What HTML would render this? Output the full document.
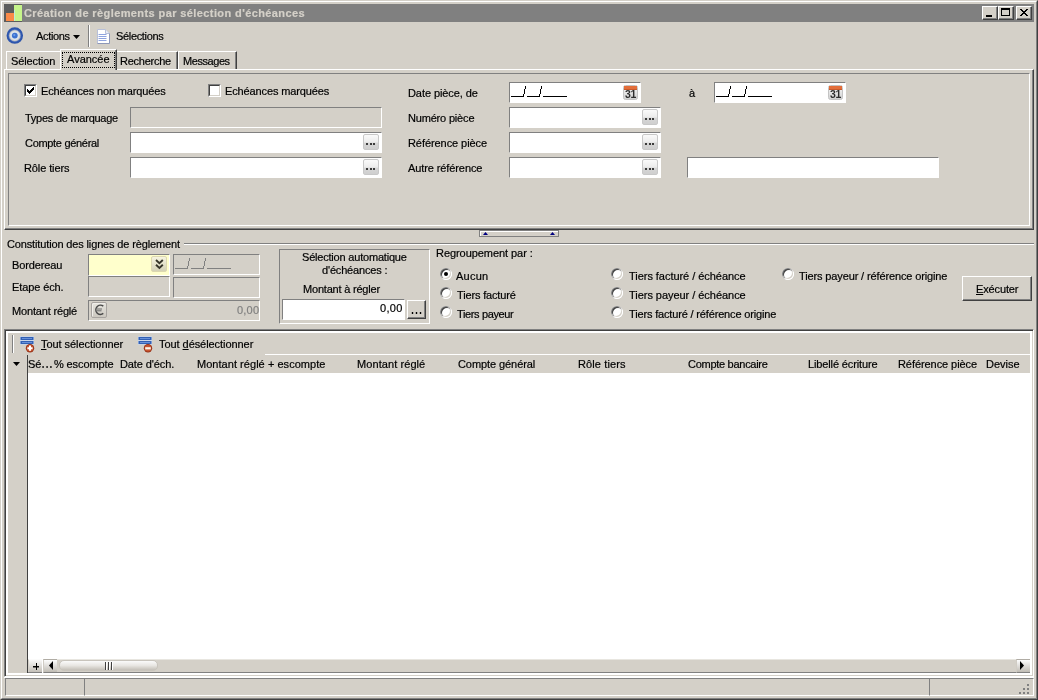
<!DOCTYPE html>
<html><head><meta charset="utf-8">
<style>
*{box-sizing:border-box}
html,body{margin:0;padding:0}
body{width:1038px;height:700px;overflow:hidden;background:#D4D0C8;position:relative;font-family:"Liberation Sans",sans-serif;font-size:11px;color:#000}
.a{position:absolute}
svg text{will-change:transform}
.t{position:absolute;white-space:nowrap;line-height:13px;font-size:11px;will-change:transform;-webkit-text-stroke:0.2px currentColor}
.sunk{position:absolute;border-top:1px solid #808080;border-left:1px solid #808080;border-bottom:1px solid #fff;border-right:1px solid #fff}
.fld{position:absolute;background:#fff;border-top:1px solid #808080;border-left:1px solid #808080;border-bottom:1px solid #fff;border-right:1px solid #fff}
.dis{background:#D4D0C8}
.dots{position:absolute;width:16px;height:16px;border:1px solid #C8C8C8;border-radius:2px;background:linear-gradient(#fafafa,#ececec 50%,#d6d6d6 60%,#cfcfcf)}
.dots i{position:absolute;top:8px;width:2px;height:2px;background:#3a3a3a}
.etch{position:absolute;border:1px solid #808080;box-shadow:inset 1px 1px 0 #fff,1px 1px 0 #fff}
.radio{position:absolute;width:12px;height:12px;border-radius:50%;background:#fff;
 box-shadow: inset 1px 1px 0 #808080, inset -1px -1px 0 #fff;}
.radio:before{content:"";position:absolute;left:1px;top:1px;width:10px;height:10px;border-radius:50%;box-shadow: inset 1px 1px 0 #404040, inset -1px -1px 0 #D4D0C8}
.radio.on:after{content:"";position:absolute;left:4px;top:4px;width:4px;height:4px;border-radius:50%;background:#000}
.chk{position:absolute;width:13px;height:13px;background:#fff;border-top:1px solid #808080;border-left:1px solid #808080;border-bottom:1px solid #fff;border-right:1px solid #fff}
.chk:before{content:"";position:absolute;left:0;top:0;right:0;bottom:0;border-top:1px solid #404040;border-left:1px solid #404040;border-bottom:1px solid #D4D0C8;border-right:1px solid #D4D0C8}
.btn{position:absolute;background:#D4D0C8;border-top:1px solid #fff;border-left:1px solid #fff;border-right:1px solid #404040;border-bottom:1px solid #404040;box-shadow:inset -1px -1px 0 #808080}
</style></head><body>

<!-- window frame -->
<div class="a" style="left:0;top:0;width:1038px;height:700px;border-top:1px solid #D4D0C8;border-left:1px solid #D4D0C8;border-right:1px solid #404040;border-bottom:1px solid #404040"></div>
<div class="a" style="left:1px;top:1px;width:1036px;height:698px;border-top:1px solid #fff;border-left:1px solid #fff;border-right:1px solid #808080;border-bottom:1px solid #808080"></div>

<!-- title bar -->
<div class="a" style="left:4px;top:4px;width:1030px;height:18px;background:#808080"></div>
<div class="a" style="left:4px;top:4px;width:18px;height:18px;background:#5c5c5c"></div>
<div class="a" style="left:6px;top:13px;width:8px;height:8px;background:#FA8A48"></div>
<div class="a" style="left:14px;top:5px;width:8px;height:16px;background:#C6F48A"></div>
<div class="a" style="left:14px;top:10px;width:1px;height:11px;background:#BEEFD8"></div>
<div class="t" style="left:24px;top:7px;font-weight:bold;color:#D4D0C8;letter-spacing:0.4px">Création de règlements par sélection d'échéances</div>
<!-- title buttons -->
<div class="btn" style="left:982px;top:6px;width:16px;height:14px"></div>
<div class="a" style="left:986px;top:15px;width:6px;height:2px;background:#000"></div>
<div class="btn" style="left:998px;top:6px;width:16px;height:14px"></div>
<div class="a" style="left:1001px;top:8px;width:9px;height:8px;border:1px solid #000;border-top-width:2px"></div>
<div class="btn" style="left:1016px;top:6px;width:16px;height:14px"></div>
<svg class="a" style="left:1016px;top:6px" width="16" height="14"><path d="M4 3 L11 10 M5 3 L12 10 M11 3 L4 10 M12 3 L5 10" stroke="#000" stroke-width="1" shape-rendering="crispEdges"/></svg>


<!-- toolbar -->
<svg class="a" style="left:5px;top:26px" width="20" height="20" viewBox="0 0 20 20">
 <circle cx="9.8" cy="9.6" r="7.1" fill="none" stroke="#2E56AC" stroke-width="2.3"/>
 <circle cx="9.8" cy="9.6" r="5.9" fill="none" stroke="#5A7EC8" stroke-width="0.6"/>
 <circle cx="9.8" cy="9.6" r="4.6" fill="#DCE4EC"/>
 <circle cx="9.8" cy="9.6" r="2.9" fill="#3C72D0"/>
 <circle cx="9.3" cy="9.1" r="1.1" fill="#6C9CE8"/>
</svg>
<div class="t" style="left:36px;top:30px;letter-spacing:-0.33px">Actions</div>
<svg class="a" style="left:73px;top:35px" width="8" height="5"><path d="M0 0 H7 L3.5 4 Z" fill="#000"/></svg>
<div class="a" style="left:88px;top:25px;width:1px;height:22px;background:#808080"></div>
<div class="a" style="left:89px;top:25px;width:1px;height:22px;background:#fff"></div>
<svg class="a" style="left:96px;top:28px" width="15" height="17" viewBox="0 0 15 17">
 <path d="M1.5 1.5 H9.5 L13.5 5.5 V15.5 H1.5 Z" fill="#fff" stroke="#B8C0D8" stroke-width="1"/>
 <path d="M9.5 1.5 V5.5 H13.5" fill="#E8ECF6" stroke="#B8C0D8" stroke-width="1"/>
 <path d="M13.5 5.5 V15.5 H1.5" fill="none" stroke="#8E98B8" stroke-width="1"/>
 <rect x="2.5" y="6" width="8" height="1" fill="#8FA4E0"/>
 <rect x="2.5" y="8" width="8" height="1" fill="#8FA4E0"/>
 <rect x="2.5" y="10" width="8" height="1" fill="#8FA4E0"/>
 <rect x="2.5" y="12" width="8" height="1" fill="#8FA4E0"/>
</svg>
<div class="t" style="left:116px;top:30px;letter-spacing:-0.33px">Sélections</div>

<!-- tabs -->
<div class="a" style="left:6px;top:51px;width:55px;height:18px;border-top:1px solid #fff;border-left:1px solid #fff"></div>
<div class="t" style="left:11px;top:55px;letter-spacing:-0.12px">Sélection</div>
<div class="a" style="left:116px;top:51px;width:62px;height:18px;border-top:1px solid #fff;border-right:1px solid #404040;box-shadow:inset -1px 0 0 #808080"></div>
<div class="t" style="left:120px;top:55px;letter-spacing:-0.25px">Recherche</div>
<div class="a" style="left:178px;top:51px;width:59px;height:18px;border-top:1px solid #fff;border-left:1px solid #fff;border-right:1px solid #404040;box-shadow:inset -1px 0 0 #808080"></div>
<div class="t" style="left:183px;top:55px;letter-spacing:-0.43px">Messages</div>

<!-- tab page -->
<div class="a" style="left:4px;top:69px;width:1030px;height:161px;border-top:1px solid #fff;border-left:1px solid #fff;border-right:1px solid #404040;border-bottom:1px solid #404040;box-shadow:inset -1px -1px 0 #808080"></div>
<!-- active tab -->
<div class="a" style="left:60px;top:49px;width:57px;height:21px;background:#D4D0C8;border-top:1px solid #fff;border-left:1px solid #fff;border-right:1px solid #404040;box-shadow:inset -1px 0 0 #808080"></div>
<div class="t" style="left:67px;top:53px">Avancée</div>
<div class="a" style="left:62px;top:52px;width:53px;height:16px;border:1px dotted #000"></div>

<!-- inner etched frame -->
<div class="sunk" style="left:8px;top:73px;width:1022px;height:153px"></div>


<!-- top panel contents -->
<div class="chk" style="left:24px;top:84px"></div>
<svg class="a" style="left:27px;top:87px" width="7" height="7" shape-rendering="crispEdges"><g fill="#000"><rect x="6" y="0" width="1" height="1"/><rect x="5" y="1" width="1" height="1"/><rect x="6" y="1" width="1" height="1"/><rect x="0" y="2" width="1" height="1"/><rect x="4" y="2" width="1" height="1"/><rect x="5" y="2" width="1" height="1"/><rect x="6" y="2" width="1" height="1"/><rect x="0" y="3" width="1" height="1"/><rect x="1" y="3" width="1" height="1"/><rect x="3" y="3" width="1" height="1"/><rect x="4" y="3" width="1" height="1"/><rect x="5" y="3" width="1" height="1"/><rect x="0" y="4" width="1" height="1"/><rect x="1" y="4" width="1" height="1"/><rect x="2" y="4" width="1" height="1"/><rect x="3" y="4" width="1" height="1"/><rect x="4" y="4" width="1" height="1"/><rect x="1" y="5" width="1" height="1"/><rect x="2" y="5" width="1" height="1"/><rect x="3" y="5" width="1" height="1"/><rect x="2" y="6" width="1" height="1"/></g></svg>
<div class="t" style="left:41px;top:85px;letter-spacing:-0.15px">Echéances non marquées</div>
<div class="chk" style="left:208px;top:84px"></div>
<div class="t" style="left:225px;top:85px;letter-spacing:-0.12px">Echéances marquées</div>

<div class="t" style="left:25px;top:112px;letter-spacing:-0.25px">Types de marquage</div>
<div class="fld dis" style="left:130px;top:107px;width:252px;height:21px"></div>
<div class="t" style="left:25px;top:137px;letter-spacing:-0.31px">Compte général</div>
<div class="fld" style="left:130px;top:132px;width:252px;height:21px"></div>
<div class="dots" style="left:363px;top:134px"><i style="left:2px"></i><i style="left:5.5px"></i><i style="left:9px"></i></div>
<div class="t" style="left:24px;top:162px;letter-spacing:-0.11px">Rôle tiers</div>
<div class="fld" style="left:130px;top:157px;width:252px;height:21px"></div>
<div class="dots" style="left:363px;top:159px"><i style="left:2px"></i><i style="left:5.5px"></i><i style="left:9px"></i></div>

<div class="t" style="left:408px;top:87px;letter-spacing:-0.08px">Date pièce, de</div>
<div class="fld" style="left:509px;top:82px;width:132px;height:21px"></div>
<svg class="a" style="left:509px;top:82px" width="60" height="18" shape-rendering="crispEdges"><g fill="#000"><rect x="2" y="14" width="13" height="1"/><rect x="16" y="4" width="1" height="3"/><rect x="15" y="7" width="1" height="5"/><rect x="14" y="12" width="1" height="2"/><rect x="18" y="14" width="13" height="1"/><rect x="32" y="4" width="1" height="3"/><rect x="31" y="7" width="1" height="5"/><rect x="30" y="12" width="1" height="2"/><rect x="34" y="14" width="24" height="1"/></g></svg>
<div class="t" style="left:408px;top:112px;letter-spacing:-0.18px">Numéro pièce</div>
<div class="fld" style="left:509px;top:107px;width:152px;height:21px"></div>
<div class="dots" style="left:642px;top:109px"><i style="left:2px"></i><i style="left:5.5px"></i><i style="left:9px"></i></div>
<div class="t" style="left:408px;top:137px;letter-spacing:-0.07px">Référence pièce</div>
<div class="fld" style="left:509px;top:132px;width:152px;height:21px"></div>
<div class="dots" style="left:642px;top:134px"><i style="left:2px"></i><i style="left:5.5px"></i><i style="left:9px"></i></div>
<div class="t" style="left:408px;top:162px;letter-spacing:-0.1px">Autre référence</div>
<div class="fld" style="left:509px;top:157px;width:152px;height:21px"></div>
<div class="dots" style="left:642px;top:159px"><i style="left:2px"></i><i style="left:5.5px"></i><i style="left:9px"></i></div>

<div class="t" style="left:689px;top:87px">à</div>
<div class="fld" style="left:714px;top:82px;width:132px;height:21px"></div>
<svg class="a" style="left:714px;top:82px" width="60" height="18" shape-rendering="crispEdges"><g fill="#000"><rect x="2" y="14" width="13" height="1"/><rect x="16" y="4" width="1" height="3"/><rect x="15" y="7" width="1" height="5"/><rect x="14" y="12" width="1" height="2"/><rect x="18" y="14" width="13" height="1"/><rect x="32" y="4" width="1" height="3"/><rect x="31" y="7" width="1" height="5"/><rect x="30" y="12" width="1" height="2"/><rect x="34" y="14" width="24" height="1"/></g></svg>
<div class="fld" style="left:687px;top:157px;width:252px;height:21px"></div>
<svg class="a" style="left:623px;top:85px;will-change:transform" width="15" height="15" viewBox="0 0 15 15">
 <defs><linearGradient id="cg623" x1="0" y1="0" x2="0" y2="1"><stop offset="0" stop-color="#FAFAFA"/><stop offset="1" stop-color="#D0D0D0"/></linearGradient></defs>
 <rect x="0.5" y="0.5" width="14" height="14" rx="2" fill="url(#cg623)" stroke="#C4C4C4"/>
 <rect x="1" y="1" width="13" height="4" fill="#E36E3A"/>
 <rect x="1" y="4" width="13" height="1" fill="#C85A2C"/>
 <text x="7.6" y="13.2" text-anchor="middle" font-family="Liberation Sans" font-weight="bold" font-size="10.5" letter-spacing="-0.3" fill="#2E2E2E">31</text>
</svg>
<svg class="a" style="left:828px;top:85px;will-change:transform" width="15" height="15" viewBox="0 0 15 15">
 <defs><linearGradient id="cg828" x1="0" y1="0" x2="0" y2="1"><stop offset="0" stop-color="#FAFAFA"/><stop offset="1" stop-color="#D0D0D0"/></linearGradient></defs>
 <rect x="0.5" y="0.5" width="14" height="14" rx="2" fill="url(#cg828)" stroke="#C4C4C4"/>
 <rect x="1" y="1" width="13" height="4" fill="#E36E3A"/>
 <rect x="1" y="4" width="13" height="1" fill="#C85A2C"/>
 <text x="7.6" y="13.2" text-anchor="middle" font-family="Liberation Sans" font-weight="bold" font-size="10.5" letter-spacing="-0.3" fill="#2E2E2E">31</text>
</svg>


<!-- splitter -->
<div class="a" style="left:479px;top:230px;width:80px;height:7px;border:1px solid #808080;box-shadow:inset 1px 1px 0 #fff"></div>
<svg class="a" style="left:479px;top:230px" width="80" height="7"><path d="M4 5 L6.5 2 L9 5 Z M71 5 L73.5 2 L76 5 Z" fill="#000080"/></svg>

<!-- middle section -->
<div class="t" style="left:7px;top:238px;letter-spacing:-0.14px">Constitution des lignes de règlement</div>
<div class="a" style="left:184px;top:243px;width:850px;height:1px;background:#808080"></div>
<div class="a" style="left:184px;top:244px;width:850px;height:1px;background:#fff"></div>

<div class="t" style="left:12px;top:259px;letter-spacing:-0.12px">Bordereau</div>
<div class="fld" style="left:88px;top:254px;width:82px;height:22px;background:#FFFFCC"></div>
<div class="a" style="left:151px;top:256px;width:16px;height:16px;border:1px solid #DCD8B0;border-radius:2px;background:linear-gradient(#F6F4E0,#D4D2B6)"></div>
<svg class="a" style="left:151.5px;top:256px" width="15" height="16"><path d="M4 4 L7.4 7.2 L10.8 4 M4 8.8 L7.4 12 L10.8 8.8" fill="none" stroke="#36362A" stroke-width="1.9"/></svg>
<div class="fld dis" style="left:173px;top:254px;width:87px;height:21px"></div>
<svg class="a" style="left:173px;top:254px" width="60" height="18" shape-rendering="crispEdges"><g fill="#808080"><rect x="2" y="14" width="13" height="1"/><rect x="16" y="4" width="1" height="3"/><rect x="15" y="7" width="1" height="5"/><rect x="14" y="12" width="1" height="2"/><rect x="18" y="14" width="13" height="1"/><rect x="32" y="4" width="1" height="3"/><rect x="31" y="7" width="1" height="5"/><rect x="30" y="12" width="1" height="2"/><rect x="34" y="14" width="24" height="1"/></g></svg>
<div class="t" style="left:12px;top:281px;letter-spacing:-0.11px">Etape éch.</div>
<div class="fld dis" style="left:88px;top:276px;width:82px;height:21px"></div>
<div class="fld dis" style="left:173px;top:277px;width:87px;height:21px"></div>
<div class="t" style="left:12px;top:305px;letter-spacing:-0.17px">Montant réglé</div>
<div class="fld dis" style="left:88px;top:300px;width:172px;height:21px"></div>
<div class="a" style="left:91px;top:302px;width:16px;height:16px;border:1px solid #A8A4A0;border-radius:2px;background:linear-gradient(#E6E4DE,#CCC8C0);box-shadow:inset 1px 1px 0 #F0EEEA"></div>
<svg class="a" style="left:91px;top:302px" width="16" height="16"><path d="M12.3 4.2 A4.6 4.6 0 1 0 12.3 11.4" fill="none" stroke="#4A4A4A" stroke-width="1.5"/><path d="M5.5 7 H11 M5.5 8.8 H10.5" stroke="#6A6A6A" stroke-width="1"/></svg>

<div class="t" style="left:237px;top:304px;color:#808080;letter-spacing:0.2px">0,00</div>

<!-- selection auto group -->
<div class="sunk" style="left:279px;top:249px;width:151px;height:75px"></div>
<div class="t" style="left:302px;top:251px;letter-spacing:-0.2px">Sélection automatique</div>
<div class="t" style="left:322px;top:264px;letter-spacing:-0.17px">d'échéances :</div>
<div class="t" style="left:303px;top:283px;letter-spacing:-0.2px">Montant à régler</div>
<div class="a" style="left:282px;top:299px;width:123px;height:21px;background:#fff;border-top:1px solid #808080;border-left:1px solid #808080;border-bottom:1px solid #fff;border-right:1px solid #fff"></div>
<div class="t" style="left:380px;top:302px;letter-spacing:0.3px">0,00</div>
<div class="btn" style="left:407px;top:300px;width:19px;height:19px"></div>
<svg class="a" style="left:411px;top:312px" width="12" height="2"><g fill="#000"><rect x="0.8" y="0" width="1.4" height="2"/><rect x="4.8" y="0" width="1.4" height="2"/><rect x="8.8" y="0" width="1.4" height="2"/></g></svg>

<!-- regroupement -->
<div class="t" style="left:436px;top:247px;letter-spacing:-0.06px">Regroupement par :</div>
<div class="radio on" style="left:440px;top:268px"></div>
<div class="t" style="left:456px;top:270px;letter-spacing:0.25px">Aucun</div>
<div class="radio" style="left:440px;top:287px"></div>
<div class="t" style="left:457px;top:289px;letter-spacing:-0.16px">Tiers facturé</div>
<div class="radio" style="left:440px;top:306px"></div>
<div class="t" style="left:457px;top:308px;letter-spacing:-0.36px">Tiers payeur</div>
<div class="radio" style="left:611px;top:268px"></div>
<div class="t" style="left:629px;top:270px;letter-spacing:-0.04px">Tiers facturé / échéance</div>
<div class="radio" style="left:611px;top:287px"></div>
<div class="t" style="left:629px;top:289px;letter-spacing:-0.04px">Tiers payeur / échéance</div>
<div class="radio" style="left:611px;top:306px"></div>
<div class="t" style="left:629px;top:308px;letter-spacing:-0.16px">Tiers facturé / référence origine</div>
<div class="radio" style="left:782px;top:268px"></div>
<div class="t" style="left:799px;top:270px;letter-spacing:-0.13px">Tiers payeur / référence origine</div>

<div class="btn" style="left:962px;top:276px;width:70px;height:25px"></div>
<div class="t" style="left:976px;top:283px;letter-spacing:-0.14px"><u>E</u>xécuter</div>


<!-- grid frame -->
<div class="a" style="left:4px;top:329px;width:1030px;height:348px;border-top:1px solid #808080;border-left:1px solid #808080;border-bottom:1px solid #fff;border-right:1px solid #fff;box-shadow:inset 1px 1px 0 #404040, inset -1px -1px 0 #D4D0C8"></div>
<div class="a" style="left:6px;top:331px;width:1026px;height:344px;background:#fff"></div>
<!-- toolbar + header band -->
<div class="a" style="left:8px;top:333px;width:1022px;height:40px;background:#D4D0C8"></div>
<div class="a" style="left:265px;top:354px;width:765px;height:1px;background:#fff"></div>
<div class="a" style="left:12px;top:335px;width:1px;height:18px;background:#808080"></div>
<div class="a" style="left:13px;top:335px;width:1px;height:18px;background:#fff"></div>
<svg class="a" style="left:20px;top:336px" width="16" height="17" viewBox="0 0 16 17">
 <rect x="0" y="0.5" width="14" height="4" fill="#C8DAF6"/>
 <rect x="0.5" y="1" width="13" height="3" fill="#3260B4"/><rect x="2" y="2" width="10" height="1" fill="#6890D8"/>
 <rect x="0" y="4.5" width="14" height="4" fill="#C8DAF6"/>
 <rect x="0.5" y="5" width="13" height="3" fill="#3260B4"/><rect x="2" y="6" width="10" height="1" fill="#6890D8"/>
 <circle cx="10" cy="12.2" r="4.2" fill="#98331A"/>
 <circle cx="10" cy="12.2" r="3.2" fill="#C85630"/>
 <path d="M10 9.6 V14.8 M7.4 12.2 H12.6" stroke="#fff" stroke-width="2"/>
</svg><svg class="a" style="left:138px;top:336px" width="16" height="17" viewBox="0 0 16 17">
 <rect x="0" y="0.5" width="14" height="4" fill="#C8DAF6"/>
 <rect x="0.5" y="1" width="13" height="3" fill="#3260B4"/><rect x="2" y="2" width="10" height="1" fill="#6890D8"/>
 <rect x="0" y="4.5" width="14" height="4" fill="#C8DAF6"/>
 <rect x="0.5" y="5" width="13" height="3" fill="#3260B4"/><rect x="2" y="6" width="10" height="1" fill="#6890D8"/>
 <circle cx="10" cy="12.2" r="4.2" fill="#98331A"/>
 <circle cx="10" cy="12.2" r="3.2" fill="#C85630"/>
 <rect x="7.2" y="11.2" width="5.6" height="2.2" fill="#FFF4E8"/>
</svg>
<div class="t" style="left:41px;top:338px;letter-spacing:-0.06px"><u>T</u>out sélectionner</div>
<div class="t" style="left:159px;top:338px;letter-spacing:-0.06px">Tout <u>d</u>ésélectionner</div>

<!-- header -->
<svg class="a" style="left:13px;top:362px" width="8" height="5"><path d="M0 0 H7 L3.5 4 Z" fill="#000"/></svg>
<div class="a" style="left:8px;top:373px;width:19px;height:300px;background:#D4D0C8"></div>
<div class="a" style="left:27px;top:355px;width:1px;height:318px;background:#404040"></div>
<div class="a" style="left:28px;top:373px;width:1002px;height:286px;background:#fff"></div>
<div class="t" style="left:28px;top:358px">Sé</div><svg class="a" style="left:42px;top:366px" width="10" height="2"><g fill="#000"><rect x="0.3" y="0.2" width="1.6" height="1.6"/><rect x="4.3" y="0.2" width="1.6" height="1.6"/><rect x="8.1" y="0.2" width="1.6" height="1.6"/></g></svg><div class="t" style="left:54px;top:358px;letter-spacing:-0.11px">% escompte</div>
<div class="t" style="left:120px;top:358px;letter-spacing:-0.1px">Date d'éch.</div>
<div class="t" style="left:197px;top:358px;letter-spacing:0.04px">Montant réglé + escompte</div>
<div class="t" style="left:357px;top:358px;letter-spacing:0.08px">Montant réglé</div>
<div class="t" style="left:458px;top:358px;letter-spacing:-0.08px">Compte général</div>
<div class="t" style="left:578px;top:358px;letter-spacing:0.11px">Rôle tiers</div>
<div class="t" style="left:688px;top:358px;letter-spacing:-0.28px">Compte bancaire</div>
<div class="t" style="left:808px;top:358px;letter-spacing:-0.13px">Libellé écriture</div>
<div class="t" style="left:898px;top:358px;letter-spacing:-0.07px">Référence pièce</div>
<div class="t" style="left:986px;top:358px">Devise</div>

<!-- scrollbar -->
<div class="a" style="left:28px;top:659px;width:1002px;height:14px;background:#D4D0C8;border-top:1px solid #E8E6E0;border-bottom:1px solid #808080"></div>
<div class="a" style="left:29px;top:659px;width:13px;height:14px;background:linear-gradient(#fdfdfd,#c4c0b8);border-bottom:1px solid #808080"></div>
<div class="a" style="left:33px;top:666px;width:6px;height:1px;background:#000;box-shadow:0 0.5px 0 #000"></div>
<div class="a" style="left:35.5px;top:663px;width:1.5px;height:7px;background:#000"></div>
<div class="a" style="left:42px;top:659px;width:1px;height:14px;background:#fff"></div>
<div class="a" style="left:43px;top:659px;width:14px;height:14px;background:linear-gradient(#fdfdfd,#c0bcb4);border-top:1px solid #B0ACA4;border-left:1px solid #D0CCC4;border-bottom:1px solid #808080"></div>
<svg class="a" style="left:43px;top:659px" width="14" height="14"><path d="M6 6.5 L10 2 V11 Z" fill="#000"/></svg>
<div class="a" style="left:59px;top:660px;width:99px;height:11px;border-radius:5px;background:linear-gradient(#fafafa,#e8e6e2 50%,#c4c0b8);border:1px solid #C8C4BC"></div>
<div class="a" style="left:105px;top:662px;width:1px;height:8px;background:#404040;box-shadow:1px 0 0 #fff, 3px 0 0 #404040, 4px 0 0 #fff, 6px 0 0 #404040, 7px 0 0 #fff"></div>
<div class="a" style="left:1016px;top:659px;width:14px;height:14px;background:linear-gradient(#fdfdfd,#c0bcb4);border-top:1px solid #B0ACA4;border-left:1px solid #D0CCC4;border-bottom:1px solid #808080"></div>
<svg class="a" style="left:1016px;top:659px" width="14" height="14"><path d="M8 6.5 L4 2 V11 Z" fill="#000"/></svg>

<!-- status bar -->
<div class="a" style="left:4px;top:677px;width:1030px;height:1px;background:#fff"></div>
<div class="sunk" style="left:5px;top:678px;width:80px;height:18px"></div>
<div class="sunk" style="left:84px;top:678px;width:846px;height:18px"></div>
<div class="sunk" style="left:929px;top:678px;width:105px;height:18px"></div>
<svg class="a" style="left:1018px;top:683px" width="13" height="13"><g fill="#808080"><rect x="9" y="1" width="2" height="2"/><rect x="5" y="5" width="2" height="2"/><rect x="9" y="5" width="2" height="2"/><rect x="1" y="9" width="2" height="2"/><rect x="5" y="9" width="2" height="2"/><rect x="9" y="9" width="2" height="2"/></g></svg>

</body></html>
